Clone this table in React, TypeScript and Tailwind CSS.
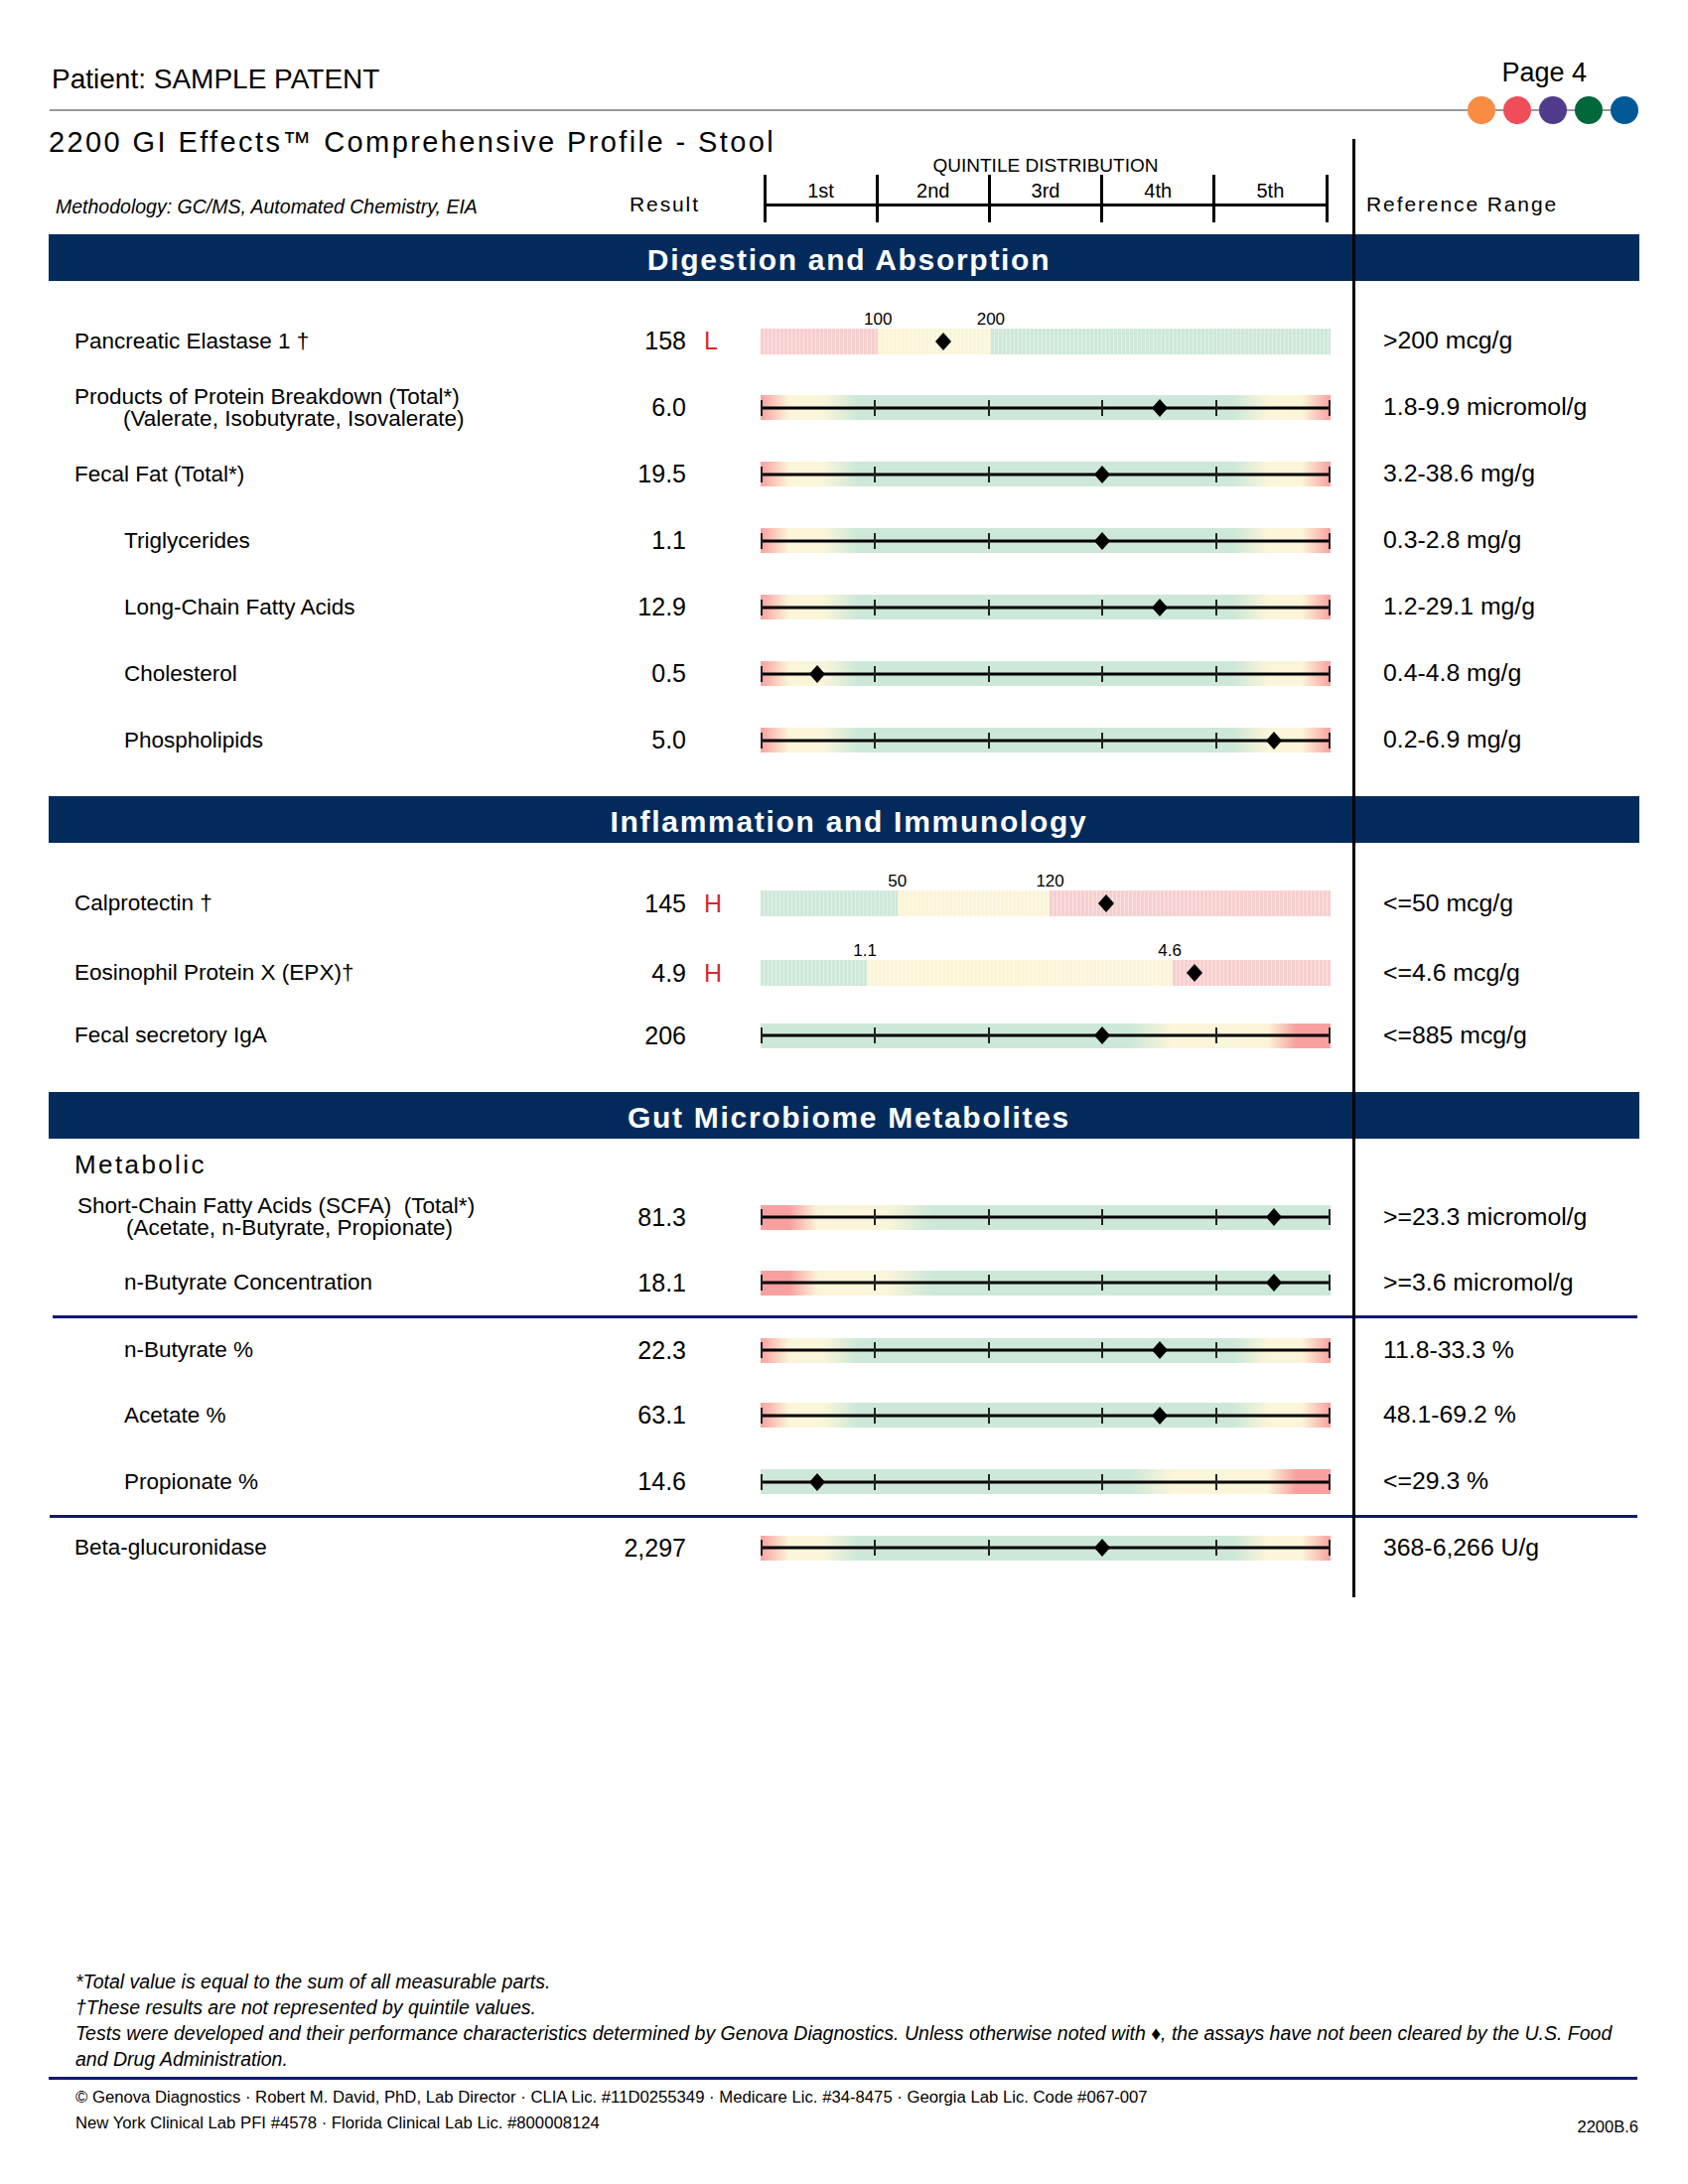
import React from 'react';

type Scale = 'both' | 'low' | 'high';
type Seg = { c: 'red' | 'cream' | 'green'; w: number };

interface Row {
  label: string;
  sub?: string;
  pad: string;
  result: string;
  flag?: 'L' | 'H';
  range: string;
  pos: number;
  scale?: Scale;
  segs?: Seg[];
  marks?: { v: string; at: number }[];
  h: string;
}

const gradients: Record<Scale, string> = {
  both: 'bg-[linear-gradient(to_right,#f8a0a0_0%,#fbf5da_5%,#fbf5da_11%,#cde8d8_17%,#cde8d8_83%,#fbf5da_89%,#fbf5da_95%,#f8a0a0_100%)]',
  low: 'bg-[linear-gradient(to_right,#f8a0a0_0%,#f8a0a0_5%,#fbf5da_10%,#fbf5da_22%,#cde8d8_30%,#cde8d8_100%)]',
  high: 'bg-[linear-gradient(to_right,#cde8d8_0%,#cde8d8_65%,#fbf5da_72%,#fbf5da_89%,#f8a0a0_94%,#f8a0a0_100%)]',
};

const stripes = {
  red: 'bg-[repeating-linear-gradient(90deg,#f6cfcf_0px,#f6cfcf_3px,#fbe2e2_3px,#fbe2e2_4px)]',
  cream: 'bg-[repeating-linear-gradient(90deg,#fbf4d6_0px,#fbf4d6_3px,#fdf9e8_3px,#fdf9e8_4px)]',
  green: 'bg-[repeating-linear-gradient(90deg,#cfe8da_0px,#cfe8da_3px,#e0f1e7_3px,#e0f1e7_4px)]',
};

const digestion: Row[] = [
  { label: 'Pancreatic Elastase 1 †', pad: 'pl-[26px]', result: '158', flag: 'L', range: '>200 mcg/g', pos: 32.1,
    segs: [{ c: 'red', w: 20.6 }, { c: 'cream', w: 19.8 }, { c: 'green', w: 59.6 }],
    marks: [{ v: '100', at: 20.6 }, { v: '200', at: 40.4 }], h: 'h-[67px]' },
  { label: 'Products of Protein Breakdown (Total*)', sub: '(Valerate, Isobutyrate, Isovalerate)', pad: 'pl-[26px]', result: '6.0', range: '1.8-9.9 micromol/g', pos: 70, scale: 'both', h: 'h-[67px]' },
  { label: 'Fecal Fat (Total*)', pad: 'pl-[26px]', result: '19.5', range: '3.2-38.6 mg/g', pos: 60, scale: 'both', h: 'h-[67px]' },
  { label: 'Triglycerides', pad: 'pl-[76px]', result: '1.1', range: '0.3-2.8 mg/g', pos: 60, scale: 'both', h: 'h-[67px]' },
  { label: 'Long-Chain Fatty Acids', pad: 'pl-[76px]', result: '12.9', range: '1.2-29.1 mg/g', pos: 70, scale: 'both', h: 'h-[67px]' },
  { label: 'Cholesterol', pad: 'pl-[76px]', result: '0.5', range: '0.4-4.8 mg/g', pos: 10, scale: 'both', h: 'h-[67px]' },
  { label: 'Phospholipids', pad: 'pl-[76px]', result: '5.0', range: '0.2-6.9 mg/g', pos: 90, scale: 'both', h: 'h-[67px]' },
];

const inflammation: Row[] = [
  { label: 'Calprotectin †', pad: 'pl-[26px]', result: '145', flag: 'H', range: '<=50 mcg/g', pos: 60.7,
    segs: [{ c: 'green', w: 24 }, { c: 'cream', w: 26.7 }, { c: 'red', w: 49.3 }],
    marks: [{ v: '50', at: 24 }, { v: '120', at: 50.8 }], h: 'h-[70px]' },
  { label: 'Eosinophil Protein X (EPX)†', pad: 'pl-[26px]', result: '4.9', flag: 'H', range: '<=4.6 mcg/g', pos: 76.1,
    segs: [{ c: 'green', w: 18.7 }, { c: 'cream', w: 53.6 }, { c: 'red', w: 27.7 }],
    marks: [{ v: '1.1', at: 18.3 }, { v: '4.6', at: 71.8 }], h: 'h-[70px]' },
  { label: 'Fecal secretory IgA', pad: 'pl-[26px]', result: '206', range: '<=885 mcg/g', pos: 60, scale: 'high', h: 'h-[56px]' },
];

const scfa: Row[] = [
  { label: 'Short-Chain Fatty Acids (SCFA)  (Total*)', sub: '(Acetate, n-Butyrate, Propionate)', pad: 'pl-[29px]', result: '81.3', range: '>=23.3 micromol/g', pos: 90, scale: 'low', h: 'h-[66px]' },
  { label: 'n-Butyrate Concentration', pad: 'pl-[76px]', result: '18.1', range: '>=3.6 micromol/g', pos: 90, scale: 'low', h: 'h-[66px]' },
];

const ratios: Row[] = [
  { label: 'n-Butyrate %', pad: 'pl-[76px]', result: '22.3', range: '11.8-33.3 %', pos: 70, scale: 'both', h: 'h-[64px]' },
  { label: 'Acetate %', pad: 'pl-[76px]', result: '63.1', range: '48.1-69.2 %', pos: 70, scale: 'both', h: 'h-[67px]' },
  { label: 'Propionate %', pad: 'pl-[76px]', result: '14.6', range: '<=29.3 %', pos: 10, scale: 'high', h: 'h-[67px]' },
];

const beta: Row[] = [
  { label: 'Beta-glucuronidase', pad: 'pl-[26px]', result: '2,297', range: '368-6,266 U/g', pos: 60, scale: 'both', h: 'h-[60px]' },
];

const Diamond = ({ pos }: { pos: number }) => (
  <svg
    className="absolute top-1/2 -translate-x-1/2 -translate-y-1/2"
    style={{ left: `${pos}%` }}
    width="16"
    height="18"
    viewBox="0 0 16 18"
  >
    <polygon points="8,0 16,9 8,18 0,9" fill="#000" />
  </svg>
);

const Bar = ({ row }: { row: Row }) => {
  if (row.segs) {
    return (
      <div className="relative h-[26px] w-full flex">
        {row.segs.map((s, i) => (
          <div key={i} className={`h-full ${stripes[s.c]}`} style={{ width: `${s.w}%` }} />
        ))}
        {row.marks?.map(m => (
          <span
            key={m.v}
            className="absolute bottom-full mb-[1px] -translate-x-1/2 text-[17px] leading-none"
            style={{ left: `${m.at}%` }}
          >
            {m.v}
          </span>
        ))}
        <Diamond pos={row.pos} />
      </div>
    );
  }
  return (
    <div className={`relative h-[25px] w-full ${gradients[row.scale ?? 'both']}`}>
      <div className="absolute inset-x-0 top-1/2 h-[3px] -translate-y-1/2 bg-black" />
      <div className="absolute inset-0 flex items-center justify-between">
        {[0, 1, 2, 3, 4, 5].map(i => (
          <div key={i} className="w-[2px] h-[16px] bg-[#222]" />
        ))}
      </div>
      <Diamond pos={row.pos} />
    </div>
  );
};

const ResultRow = ({ row }: { row: Row }) => (
  <div className={`flex items-center ${row.h}`}>
    <div className={`w-[531px] text-[22.5px] leading-[22px] whitespace-pre ${row.pad}`}>
      <div>{row.label}</div>
      {row.sub && <div className="pl-[49px]">{row.sub}</div>}
    </div>
    <div className="w-[111px] text-right text-[25px] leading-none">{row.result}</div>
    <div className="w-[75px] pl-[18px] text-[25px] leading-none text-[#d42a2a]">{row.flag}</div>
    <div className="w-[574px]">
      <Bar row={row} />
    </div>
    <div className="pl-[53px] text-[24.8px] leading-none">{row.range}</div>
  </div>
);

const SectionBar = ({ title }: { title: string }) => (
  <div className="h-[47px] bg-[#022b5c] flex items-center justify-center pl-[10px] pt-[4px] text-white font-bold text-[30px] leading-none tracking-[1.7px]">
    {title}
  </div>
);

const dots = ['bg-[#f78c42]', 'bg-[#f04d5b]', 'bg-[#513b8d]', 'bg-[#00683a]', 'bg-[#005a97]'];

export default function App() {
  return (
    <div className="w-[1700px] h-[2200px] bg-white text-black font-['Liberation_Sans',Arial,sans-serif] px-[49px] flex flex-col">
      <div className="h-[97px] flex justify-between items-start">
        <div className="mt-[66px] ml-[3px] text-[28px] leading-none">Patient: SAMPLE PATENT</div>
        <div className="mt-[60px] mr-[53px] text-[27px] leading-none">Page 4</div>
      </div>
      <div className="h-[28px] flex items-center mr-[1px]">
        <div className="flex-1 ml-[1px] h-[2px] bg-[#9b9b9b]" />
        {dots.map((d, i) => (
          <React.Fragment key={d}>
            {i > 0 && <div className="w-[8px] h-[2px] bg-[#9b9b9b]" />}
            <div className={`w-[28px] h-[28px] rounded-full ${d}`} />
          </React.Fragment>
        ))}
      </div>

      <div className="relative">
        <div className="h-[32px] pt-[4px]">
          <div className="text-[29px] leading-none tracking-[2.4px]">2200 GI Effects™ Comprehensive Profile - Stool</div>
        </div>

        <div className="h-[79px] flex">
          <div className="w-[531px] pt-[42px] pl-[7px] text-[19.5px] italic leading-none">
            Methodology: GC/MS, Automated Chemistry, EIA
          </div>
          <div className="w-[186px] pt-[38px] pl-[54px] text-[21px] leading-none tracking-[1.9px]">Result</div>
          <div className="w-[574px] flex flex-col items-center">
            <div className="h-[19px] text-[19px] leading-none">QUINTILE DISTRIBUTION</div>
            <div className="w-[569px] h-[48px] flex">
              {['1st', '2nd', '3rd', '4th', '5th'].map(q => (
                <div key={q} className="flex-1 border-l-[3px] last:border-r-[3px] border-black flex flex-col">
                  <div className="h-[29px] pt-[6px] text-[20px] leading-none text-center">{q}</div>
                  <div className="h-[3px] bg-black" />
                </div>
              ))}
            </div>
          </div>
          <div className="pl-[36px] pt-[38px] text-[21px] leading-none tracking-[1.9px]">Reference Range</div>
        </div>

        <SectionBar title="Digestion and Absorption" />
        <div className="pt-[27px] pb-[23px]">
          {digestion.map(r => <ResultRow key={r.label} row={r} />)}
        </div>

        <SectionBar title="Inflammation and Immunology" />
        <div className="pt-[26px] pb-[29px]">
          {inflammation.map(r => <ResultRow key={r.label} row={r} />)}
        </div>

        <SectionBar title="Gut Microbiome Metabolites" />
        <div className="pb-[20px]">
          <div className="h-[46px] flex items-center pt-[5px] pl-[26px] text-[26px] leading-none tracking-[2.4px]">Metabolic</div>
          {scfa.map(r => <ResultRow key={r.label} row={r} />)}
          <div className="h-[3px] bg-[#141a6e] ml-[4px] mr-[2px]" />
          {ratios.map(r => <ResultRow key={r.label} row={r} />)}
          <div className="h-[3px] bg-[#141a6e] ml-[1px] mr-[2px]" />
          {beta.map(r => <ResultRow key={r.label} row={r} />)}
        </div>

        <div className="absolute left-[1313px] top-[15px] bottom-0 w-[3px] bg-black" />
      </div>

      <div className="mt-[374px] pl-[27px] text-[19.5px] italic leading-[26px] whitespace-nowrap">
        <div>*Total value is equal to the sum of all measurable parts.</div>
        <div>†These results are not represented by quintile values.</div>
        <div>Tests were developed and their performance characteristics determined by Genova Diagnostics. Unless otherwise noted with ♦, the assays have not been cleared by the U.S. Food</div>
        <div>and Drug Administration.</div>
      </div>
      <div className="mt-[5px] h-[3px] bg-[#141a6e] mr-[2px]" />
      <div className="mt-[5px] pl-[27px] text-[16.7px] leading-[26px]">
        <div>© Genova Diagnostics · Robert M. David, PhD, Lab Director · CLIA Lic. #11D0255349 · Medicare Lic. #34-8475 · Georgia Lab Lic. Code #067-007</div>
        <div className="flex justify-between">
          <div>New York Clinical Lab PFI #4578 · Florida Clinical Lab Lic. #800008124</div>
          <div className="pt-[3px] pr-[1px] text-[16.5px]">2200B.6</div>
        </div>
      </div>
    </div>
  );
}
